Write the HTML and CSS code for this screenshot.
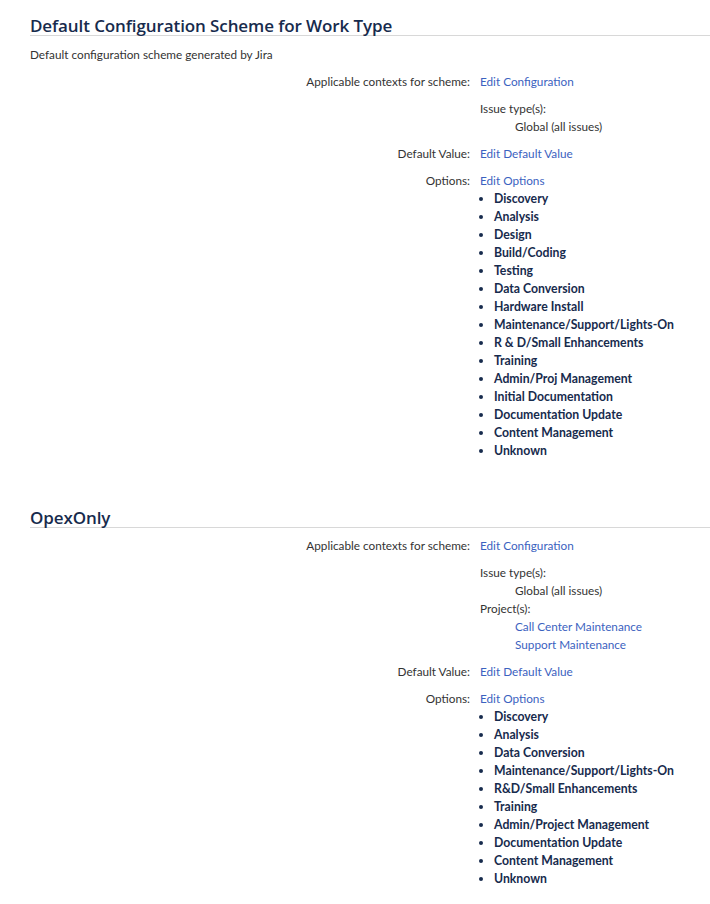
FILE: index.html
```html
<!DOCTYPE html>
<html>
<head>
<meta charset="utf-8">
<title>Custom field configuration schemes</title>
<link rel="stylesheet" href="styles.css">
</head>
<body>

<div class="scheme">
  <h2>Default Configuration Scheme for Work Type</h2>
  <p class="desc">Default configuration scheme generated by Jira</p>
  <dl class="props">
    <dt>Applicable contexts for scheme:</dt>
    <dd>
      <a href="#">Edit Configuration</a>
      <div class="ctx">
        <div>Issue type(s):</div>
        <div class="sub">Global (all issues)</div>
      </div>
    </dd>
    <dt>Default Value:</dt>
    <dd><a href="#">Edit Default Value</a></dd>
    <dt>Options:</dt>
    <dd>
      <a href="#">Edit Options</a>
      <ul class="opts">
        <li>Discovery</li>
        <li>Analysis</li>
        <li>Design</li>
        <li>Build/Coding</li>
        <li>Testing</li>
        <li>Data Conversion</li>
        <li>Hardware Install</li>
        <li>Maintenance/Support/Lights-On</li>
        <li>R &amp; D/Small Enhancements</li>
        <li>Training</li>
        <li>Admin/Proj Management</li>
        <li>Initial Documentation</li>
        <li>Documentation Update</li>
        <li>Content Management</li>
        <li>Unknown</li>
      </ul>
    </dd>
  </dl>
</div>

<div class="scheme">
  <h2>OpexOnly</h2>
  <dl class="props">
    <dt>Applicable contexts for scheme:</dt>
    <dd>
      <a href="#">Edit Configuration</a>
      <div class="ctx">
        <div>Issue type(s):</div>
        <div class="sub">Global (all issues)</div>
        <div>Project(s):</div>
        <div class="sub"><a href="#">Call Center Maintenance</a></div>
        <div class="sub"><a href="#">Support Maintenance</a></div>
      </div>
    </dd>
    <dt>Default Value:</dt>
    <dd><a href="#">Edit Default Value</a></dd>
    <dt>Options:</dt>
    <dd>
      <a href="#">Edit Options</a>
      <ul class="opts">
        <li>Discovery</li>
        <li>Analysis</li>
        <li>Data Conversion</li>
        <li>Maintenance/Support/Lights-On</li>
        <li>R&amp;D/Small Enhancements</li>
        <li>Training</li>
        <li>Admin/Project Management</li>
        <li>Documentation Update</li>
        <li>Content Management</li>
        <li>Unknown</li>
      </ul>
    </dd>
  </dl>
</div>

</body>
</html>
```

FILE: styles.css
```css
* {
  box-sizing: border-box;
}

body {
  margin: 0;
  padding: 17px 0 0 30px;
  background-color: #ffffff;
  color: #333333;
  font-family: Lato, "Open Sans", sans-serif;
  font-size: 11.75px;
  line-height: 18px;
}

a {
  color: #3b62c0;
  text-decoration: none;
}

.scheme {
  margin-bottom: 49px;
}

.scheme h2 {
  margin: 0;
  font-family: "Open Sans", sans-serif;
  font-size: 17px;
  line-height: 18px;
  font-weight: 600;
  letter-spacing: -0.1px;
  color: #172b4d;
  border-bottom: 1px solid #d8d8d8;
}

.desc {
  margin: 10px 0 9px 0;
}

.props {
  display: grid;
  grid-template-columns: 440px 1fr;
  column-gap: 10px;
  row-gap: 9px;
  margin: 9px 0 0 0;
}

.props dt {
  text-align: right;
}

.props dd {
  margin: 0;
}

.ctx {
  margin-top: 9px;
}

.ctx .sub {
  padding-left: 35px;
}

.opts {
  margin: 0;
  padding-left: 14px;
  font-size: 12.25px;
  font-weight: 700;
  color: #172b4d;
}
```
